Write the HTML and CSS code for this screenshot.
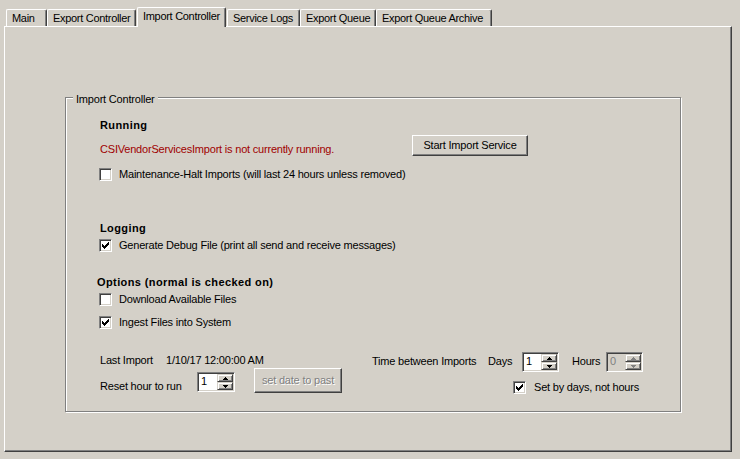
FILE: index.html
```html
<!DOCTYPE html>
<html>
<head>
<meta charset="utf-8">
<link rel="stylesheet" href="styles.css">
</head>
<body>
<div class="tabs">
  <div class="tab t-main">Main</div>
  <div class="tab t-ec">Export Controller</div>
  <div class="tab t-ic active">Import Controller</div>
  <div class="tab t-sl">Service Logs</div>
  <div class="tab t-eq">Export Queue</div>
  <div class="tab t-eqa">Export Queue Archive</div>
</div>
<div class="panel">
  <div class="group">
    <div class="legend">Import Controller</div>
    <div class="title">Running</div>
    <div class="status">
      <span class="err">CSIVendorServicesImport is not currently running.</span>
      <button class="btn start">Start Import Service</button>
    </div>
    <div class="check-row r-maint">
      <span class="cb"></span>
      <span class="cl">Maintenance-Halt Imports (will last 24 hours unless removed)</span>
    </div>
    <div class="title t-log">Logging</div>
    <div class="check-row r-gen">
      <span class="cb"><svg width="11" height="11" viewBox="0 0 11 11"><path d="M2 4H3V5H4V6H5V5H6V4H7V3H8V2H9V5H8V6H7V7H6V8H5V9H4V8H3V7H2Z" fill="#000"/></svg></span>
      <span class="cl">Generate Debug File (print all send and receive messages)</span>
    </div>
    <div class="title t-opt">Options (normal is checked on)</div>
    <div class="check-row r-dl">
      <span class="cb"></span>
      <span class="cl">Download Available Files</span>
    </div>
    <div class="check-row r-ing">
      <span class="cb"><svg width="11" height="11" viewBox="0 0 11 11"><path d="M2 4H3V5H4V6H5V5H6V4H7V3H8V2H9V5H8V6H7V7H6V8H5V9H4V8H3V7H2Z" fill="#000"/></svg></span>
      <span class="cl">Ingest Files into System</span>
    </div>
    <div class="bottom">
      <div class="bl">
        <div class="li-row">
          <span class="li-label">Last Import</span>
          <span>1/10/17 12:00:00 AM</span>
        </div>
        <div class="reset-row">
          <span class="reset-label">Reset hour to run</span>
          <div class="spin sp-reset">
            <span class="spin-val">1</span>
            <span class="spin-btns">
              <span class="sb"><svg width="5" height="3" viewBox="0 0 5 3"><path d="M2 0H3V1H4V2H5V3H0V2H1V1H2Z" fill="#000"/></svg></span>
              <span class="sb"><svg width="5" height="3" viewBox="0 0 5 3"><path d="M0 0H5V1H4V2H3V3H2V2H1V1H0Z" fill="#000"/></svg></span>
            </span>
          </div>
          <button class="btn past" disabled>set date to past</button>
        </div>
      </div>
      <div class="br">
        <div class="tb-row">
          <span class="tb-label">Time between Imports</span>
          <span class="days-label">Days</span>
          <div class="spin sp-small">
            <span class="spin-val">1</span>
            <span class="spin-btns">
              <span class="sb"><svg width="5" height="3" viewBox="0 0 5 3"><path d="M2 0H3V1H4V2H5V3H0V2H1V1H2Z" fill="#000"/></svg></span>
              <span class="sb"><svg width="5" height="3" viewBox="0 0 5 3"><path d="M0 0H5V1H4V2H3V3H2V2H1V1H0Z" fill="#000"/></svg></span>
            </span>
          </div>
          <span class="hours-label">Hours</span>
          <div class="spin sp-small disabled">
            <span class="spin-val">0</span>
            <span class="spin-btns">
              <span class="sb"><svg width="5" height="3" viewBox="0 0 5 3"><path d="M2 0H3V1H4V2H5V3H0V2H1V1H2Z" fill="#808080"/></svg></span>
              <span class="sb"><svg width="5" height="3" viewBox="0 0 5 3"><path d="M0 0H5V1H4V2H3V3H2V2H1V1H0Z" fill="#808080"/></svg></span>
            </span>
          </div>
        </div>
        <div class="check-row r-days">
          <span class="cb"><svg width="11" height="11" viewBox="0 0 11 11"><path d="M2 4H3V5H4V6H5V5H6V4H7V3H8V2H9V5H8V6H7V7H6V8H5V9H4V8H3V7H2Z" fill="#000"/></svg></span>
          <span class="cl">Set by days, not hours</span>
        </div>
      </div>
    </div>
  </div>
</div>
</body>
</html>
```

FILE: styles.css
```css
html, body {
  margin: 0;
  padding: 0;
  background: #d4d0c8;
}
body {
  font-family: "Liberation Sans", Arial, sans-serif;
  font-size: 11px;
  line-height: 13px;
  letter-spacing: -0.2px;
  color: #000;
  width: 740px;
  height: 459px;
  overflow: hidden;
}

/* ---------- tabs ---------- */
.tabs {
  display: flex;
  align-items: flex-end;
  height: 26px;
  padding-left: 6px;
}
.tab {
  box-sizing: border-box;
  height: 17px;
  padding: 2px 0 0 5px;
  border-top: 1px solid #fff;
  border-left: 1px solid #fff;
  border-right: 1px solid #404040;
  border-radius: 2px 2px 0 0;
  box-shadow: inset -1px 0 0 #808080;
  white-space: nowrap;
  letter-spacing: -0.3px;
}
.t-main { width: 41px; }
.t-ec { width: 89px; }
.t-ic { width: 89px; margin: 0 1px; }
.t-sl { width: 73px; }
.t-eq { width: 76px; }
.t-eqa { width: 116px; }
.tab.active {
  position: relative;
  z-index: 1;
  height: 20px;
  margin-bottom: -1px;
  padding-top: 2px;
  background: #d4d0c8;
}

/* ---------- panel ---------- */
.panel {
  box-sizing: border-box;
  margin-left: 4px;
  width: 728px;
  height: 426px;
  border-top: 1px solid #fff;
  border-left: 1px solid #fff;
  border-right: 1px solid #404040;
  border-bottom: 1px solid #404040;
  box-shadow: inset -1px -1px 0 #808080;
  padding: 70px 0 0 60px;
}

/* ---------- group box ---------- */
.group {
  position: relative;
  box-sizing: border-box;
  width: 616px;
  height: 315px;
  border: 1px solid #808080;
  box-shadow: 1px 1px 0 #fff, inset 1px 1px 0 #fff;
  padding: 21px 0 0 34px;
}
.legend {
  position: absolute;
  top: -5px;
  left: 7px;
  padding: 0 3px;
  background: #d4d0c8;
  line-height: 13px;
}
.title {
  font-weight: bold;
  letter-spacing: 0.4px;
  height: 13px;
  white-space: nowrap;
}
.t-log { margin-top: 41px; }
.t-opt { margin-top: 24px; margin-left: -3px; }

.status {
  display: grid;
  grid-template-columns: 312px 116px;
  align-items: end;
  margin-top: 3px;
  height: 21px;
}
.err {
  color: #a00000;
  white-space: nowrap;
}

/* ---------- buttons ---------- */
.btn {
  box-sizing: border-box;
  margin: 0;
  padding: 0;
  font: inherit;
  letter-spacing: inherit;
  color: #000;
  background: #d4d0c8;
  border: 1px solid;
  border-color: #fff #404040 #404040 #fff;
  box-shadow: inset -1px -1px 0 #808080;
  border-radius: 0;
  text-align: center;
  white-space: nowrap;
}
.start {
  width: 116px;
  height: 21px;
}
.past {
  width: 88px;
  height: 25px;
  margin-left: 19px;
  color: #808080;
  text-shadow: 1px 1px 0 #fff;
}

/* ---------- checkboxes ---------- */
.check-row {
  display: flex;
  align-items: flex-start;
  height: 13px;
  margin-left: -1px;
}
.r-maint { margin-top: 12px; }
.r-gen { margin-top: 4px; }
.r-dl { margin-top: 4px; }
.r-ing { margin-top: 10px; }
.cb {
  box-sizing: border-box;
  flex: none;
  width: 13px;
  height: 13px;
  background: #fff;
  border: 1px solid;
  border-color: #808080 #fff #fff #808080;
  box-shadow: inset 1px 1px 0 #404040, inset -1px -1px 0 #d4d0c8;
  display: block;
}
.cb svg {
  display: block;
  shape-rendering: crispEdges;
}
.cl {
  margin-left: 7px;
  white-space: nowrap;
}

/* ---------- bottom area ---------- */
.bottom {
  display: flex;
  margin-top: 23px;
}
.bl {
  width: 272px;
}
.li-row {
  display: flex;
  box-sizing: border-box;
  height: 16px;
  padding-top: 2px;
  white-space: nowrap;
}
.li-label {
  width: 66px;
}
.reset-row {
  display: flex;
  align-items: flex-start;
}
.reset-label {
  width: 97px;
  margin-top: 12px;
  white-space: nowrap;
}
.sp-reset {
  width: 38px;
  margin-top: 4px;
}

.tb-row {
  display: flex;
  align-items: flex-start;
  white-space: nowrap;
}
.tb-label {
  width: 116px;
  margin-top: 3px;
}
.days-label {
  width: 34px;
  margin-top: 3px;
}
.hours-label {
  width: 34px;
  margin-left: 13px;
  margin-top: 3px;
}
.r-days {
  margin-top: 9px;
  margin-left: 141px;
}
.r-days .cl {
  margin-left: 8px;
}

/* ---------- spin boxes ---------- */
.spin {
  box-sizing: border-box;
  display: flex;
  height: 20px;
  padding: 1px;
  background: #fff;
  border: 1px solid;
  border-color: #808080 #fff #fff #808080;
  box-shadow: inset 1px 1px 0 #404040, inset -1px -1px 0 #d4d0c8;
}
.sp-small {
  width: 37px;
}
.spin.disabled {
  background: #d4d0c8;
}
.spin-val {
  flex: 1;
  padding: 1px 0 0 2px;
  line-height: 13px;
}
.spin.disabled .spin-val {
  color: #808080;
}
.spin-btns {
  display: flex;
  flex-direction: column;
  width: 16px;
}
.sb {
  box-sizing: border-box;
  height: 8px;
  width: 16px;
  background: #d4d0c8;
  border: 1px solid;
  border-color: #d4d0c8 #404040 #404040 #d4d0c8;
  box-shadow: inset 1px 1px 0 #fff, inset -1px -1px 0 #808080;
  display: flex;
  align-items: center;
  justify-content: center;
}
.sb svg {
  display: block;
  shape-rendering: crispEdges;
}
```
